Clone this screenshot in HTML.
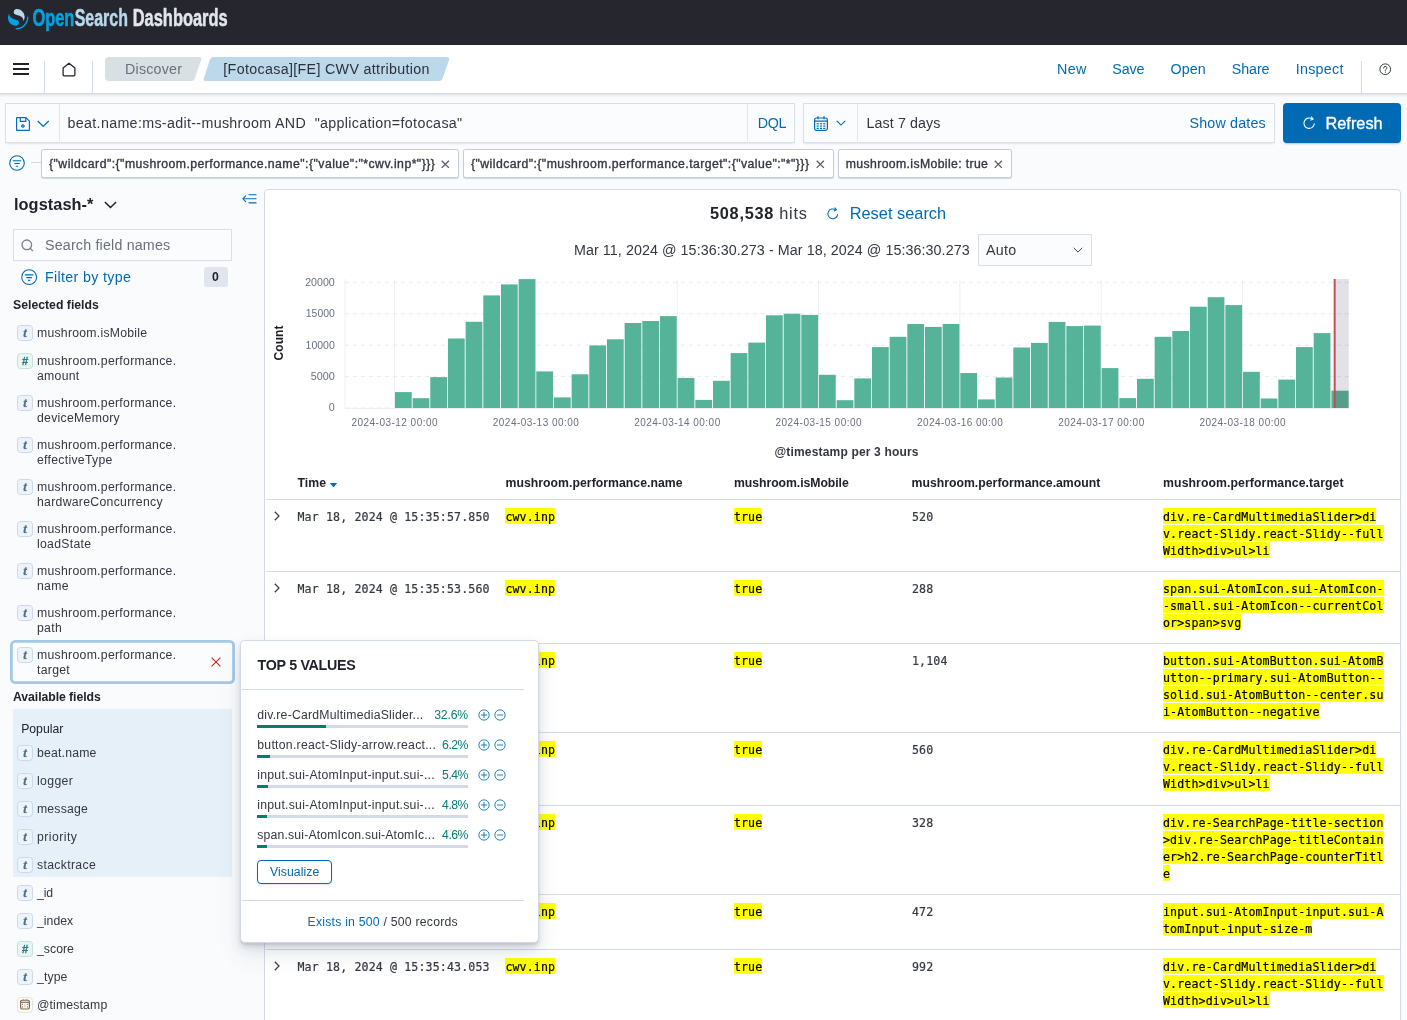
<!DOCTYPE html>
<html lang="en">
<head>
<meta charset="utf-8">
<title>Discover - OpenSearch Dashboards</title>
<style>
*{box-sizing:border-box}
html,body{margin:0;padding:0}
html{background:#FAFBFD;overflow:hidden}
body{width:1407px;height:1020px;overflow:hidden;position:relative;background:#FAFBFD;color:#343741;will-change:transform;
 font-family:var(--sans);font-size:14px;line-height:1;-webkit-font-smoothing:antialiased}
:root{--sans:"Liberation Sans",sans-serif;--mono:"DejaVu Sans Mono","Liberation Mono",monospace;--blue:#006BB4;--bd:#D3DAE6;--k:1.02}
.abs{position:absolute}
.t{position:absolute;white-space:nowrap;line-height:1;transform:translateY(-50%)}
.b{font-weight:700}
.m{font-weight:400;-webkit-text-stroke:.35px currentColor}
.blue{color:var(--blue)}
.f10{font-size:calc(10px*var(--k))}
.f12{font-size:calc(12px*var(--k))}
.f14{font-size:calc(14px*var(--k))}
.f16{font-size:calc(16px*var(--k))}
svg{position:absolute;overflow:visible}
/* header */
#hdr{left:0;top:0;width:1407px;height:45px;background:#25262E}
#nav{left:-6px;top:45px;width:1419px;height:49px;background:#fff;border-bottom:1px solid #D3DAE6;box-shadow:0 2px 3px -1px rgba(152,162,179,.35)}
.vsep{position:absolute;width:1px;background:#D3DAE6}
.crumb{position:absolute;top:57px;height:24px}
/* query */
.box{position:absolute;background:#FBFCFD;border:1px solid #D9DFEA;box-shadow:0 1px 1px -1px rgba(152,162,179,.2),0 2px 2px -1px rgba(152,162,179,.2)}
.pill{position:absolute;top:149px;height:29px;background:#fff;border:1px solid #C2CCDB;border-radius:2.500px;box-shadow:0 1px 1px rgba(120,132,155,.3)}
/* sidebar */
.ftok{position:absolute;left:17px;width:16px;height:16px;border-radius:3.500px;border:1px solid #C7DAEC;background:#EEF3FA}
.ftok.n{border-color:#BFE3D8;background:#E9F6F1}
.ftok.d{border-color:#E6E4DF;background:#FCFBF9}
.ftok i{position:absolute;left:0;top:-.100px;width:14px;height:14px;text-align:center;font:italic 700 12.600px/14px "Liberation Serif",serif;color:#4A7194;-webkit-text-stroke:.3px #4A7194}
.ftok.n i{top:0;font:italic 700 11.500px/14px "Liberation Sans",sans-serif;color:#1B8577}
.fn{position:absolute;left:37px;white-space:nowrap;line-height:15px;font-size:calc(12px*var(--k));color:#343741}
/* main */
#main{left:264.300px;top:188.900px;width:1136.600px;height:850px;background:#fff;border:1px solid #D3DAE6;border-radius:4px 4px 0 0}
.hl{position:absolute;height:1px;background:#D3DAE6}
.mono{position:absolute;font-family:var(--mono);font-size:11.600px;line-height:17px;letter-spacing:0.135px;-webkit-text-stroke:.2px currentColor;color:#343741;white-space:pre}
mark{background:linear-gradient(#FFFF00,#FFFF00) 0 0/100% 15.800px no-repeat;color:#000;padding:2px 0 0}
/* popover */
#pop{left:239.800px;top:639.800px;width:299.700px;height:303.700px;background:#fff;border:1px solid #D3DAE6;border-radius:5px;
 box-shadow:0 12px 24px rgba(65,78,101,.1),0 6px 12px rgba(65,78,101,.1),0 4px 4px rgba(65,78,101,.1),0 2px 2px rgba(65,78,101,.1)}
.bar{position:absolute;left:257px;width:211px;height:3px;background:#D3DAE6}
.bar b{position:absolute;left:0;top:0;height:3px;background:#017D73}
.w55,.w57,.w59,.w61{letter-spacing:-0.5px}
.w9{letter-spacing:-0.33px}
.w51{letter-spacing:-0.3px}
.w53{letter-spacing:-0.18px}
.w4{letter-spacing:-0.13px}
.w37{letter-spacing:-0.1px}
.w30{letter-spacing:-0.06px}
.w6,.w48{letter-spacing:-0.05px}
.w31{letter-spacing:-0.02px}
.w12,.w20{letter-spacing:0.01px}
.w49{letter-spacing:0.02px}
.w38,.w39,.w43{letter-spacing:0.03px}
.w47{letter-spacing:0.04px}
.w16,.w46{letter-spacing:0.06px}
.w62{letter-spacing:0.07px}
.w44{letter-spacing:0.08px}
.w5,.w50{letter-spacing:0.09px}
.w10{letter-spacing:0.1px}
.w40{letter-spacing:0.12px}
.w41{letter-spacing:0.15px}
.w60{letter-spacing:0.16px}
.w11,.w17,.w34{letter-spacing:0.18px}
.w32{letter-spacing:0.19px}
.w1,.w52{letter-spacing:0.22px}
.w63{letter-spacing:0.23px}
.w21,.w56,.w58{letter-spacing:0.25px}
.w45{letter-spacing:0.26px}
.w54{letter-spacing:0.27px}
.w22,.w23,.w24,.w25,.w26,.w27,.w28,.w29{letter-spacing:0.29px}
.w7{letter-spacing:0.3px}
.w18{letter-spacing:0.32px}
.w2,.w3,.w8,.w36{letter-spacing:0.33px}
.w33{letter-spacing:0.35px}
.w15{letter-spacing:0.37px}
.w14{letter-spacing:0.44px}
.w13,.w35{letter-spacing:0.46px}
.w42{letter-spacing:0.72px}
.w19{letter-spacing:1.22px}
</style>
</head>
<body>
<div id="hdr" class="abs">
<svg style="left:7.700px;top:9.400px" width="20.500" height="20.500" viewBox="0 0 64 64"><path fill="#00A3E0" d="M61.7 23.5c-1.3 0-2.3 1-2.3 2.3 0 18.6-15.1 33.7-33.7 33.7-1.3 0-2.3 1-2.3 2.3s1 2.2 2.3 2.2C46.9 64 64 46.900 64 25.800c0-1.300-1-2.300-2.300-2.300z"/><path fill="#B9D9EB" d="M48.100 38c2.200-3.600 4.300-8.300 3.900-15-.9-13.800-13.400-24.300-25.200-23.100-4.600.4-9.400 4.200-8.900 10.900.2 2.900 1.600 4.600 3.900 5.900 2.200 1.200 5 2 8.200 2.900 3.800 1.100 8.300 2.300 11.700 4.800 4.100 3 6.900 6.500 6.400 13.600z"/><path fill="#00A3E0" d="M3.900 14C1.700 17.600-.4 22.300 0 29c.9 13.800 13.400 24.300 25.200 23.100 4.600-.4 9.400-4.200 8.900-10.900-.2-2.900-1.600-4.600-3.900-5.900-2.200-1.200-5-2-8.200-2.900-3.800-1.100-8.300-2.300-11.700-4.800C6.200 24.600 3.400 21.100 3.900 14z"/></svg>
<svg style="left:0;top:0" width="240" height="45"><g font-family="Liberation Sans, sans-serif" font-weight="700" font-size="23.500" stroke-width=".500" stroke-linejoin="round">
<text x="32.400" y="25.700" fill="#00A3E0" stroke="#00A3E0" textLength="42" lengthAdjust="spacingAndGlyphs">Open</text>
<text x="74.700" y="25.700" fill="#B9D9EB" stroke="#B9D9EB" textLength="53.300" lengthAdjust="spacingAndGlyphs">Search</text>
<text x="132.700" y="25.700" fill="#E3E7EA" stroke="#E3E7EA" textLength="95" lengthAdjust="spacingAndGlyphs">Dashboards</text></g></svg>
</div>
<div id="nav" class="abs"></div>
<svg style="left:13px;top:61px" width="16" height="16" viewBox="0 0 16 16"><path d="M0 3h16M0 8h16M0 13h16" stroke="#1F212A" stroke-width="1.900" fill="none"/></svg>
<div class="vsep" style="left:44px;top:61px;height:32px"></div><div class="vsep" style="left:92px;top:61px;height:32px"></div>
<svg style="left:61.900px;top:61.500px" width="14" height="15.400" viewBox="0 0 15 16"><path d="M1.200 6.200L7.500 1.200l6.300 5v7.300a1 1 0 0 1-1 1H2.200a1 1 0 0 1-1-1z" stroke="#1F212A" stroke-width="1.350" fill="none" stroke-linejoin="round"/></svg>
<svg style="left:105px;top:57px" width="97" height="24"><path d="M4 0H94Q97.200 0 96.200 2.800L89.800 21.500Q89 24 86.300 24H4Q0 24 0 20V4Q0 0 4 0Z" fill="#D9E0E3"/></svg>
<span class="t w1 f14" style="left:125px;top:69px;color:#69707D">Discover</span>
<svg style="left:203px;top:57px" width="247" height="24"><path d="M10.500 0H244Q247 0 246.200 2.500L239.500 21.500Q238.700 24 236 24H3Q0 24 .8 21.500L7 2.500Q7.800 0 10.500 0Z" fill="#BCD9EC"/></svg>
<span class="t w2 f14" style="left:223.3px;top:69px;color:#2E3039">[Fotocasa][FE] CWV attribution</span>
<span class="t w3 f14 blue" style="left:1057px;top:69px;">New</span>
<span class="t w4 f14 blue" style="left:1112.3px;top:69px;">Save</span>
<span class="t w5 f14 blue" style="left:1170.5px;top:69px;">Open</span>
<span class="t w6 f14 blue" style="left:1231.7px;top:69px;">Share</span>
<span class="t w7 f14 blue" style="left:1295.7px;top:69px;">Inspect</span>
<div class="vsep" style="left:1361px;top:61px;height:32px"></div>
<svg style="left:1378.600px;top:62.900px" width="12.500" height="12.500" viewBox="0 0 14 14"><circle cx="7" cy="7" r="6" stroke="#343741" stroke-width="1.100" fill="none"/><path d="M5.200 5.600a1.800 1.800 0 1 1 2.600 1.600c-.5.300-.8.600-.8 1.200" stroke="#343741" stroke-width="1.100" fill="none" stroke-linecap="round"/><circle cx="7" cy="10.200" r=".7" fill="#343741"/></svg>
<div class="box" style="left:5px;top:103px;width:790px;height:40px"></div>
<div class="vsep" style="left:59px;top:104px;height:37px;background:#E3E8F0"></div><div class="vsep" style="left:747px;top:104px;height:37px;background:#E3E8F0"></div>
<svg style="left:16px;top:116.800px" width="14" height="14" viewBox="0 0 14 14"><path d="M1.100.6h8.800l3.500 3.500v8.800a.5.500 0 0 1-.5.500H1.100a.5.500 0 0 1-.5-.5V1.100a.5.500 0 0 1 .5-.5z" stroke="#006BB4" stroke-width="1.150" fill="none" stroke-linejoin="round"/><path d="M4.300.8v3.500h5.500V.8" stroke="#006BB4" stroke-width="1.150" fill="none"/><circle cx="6.900" cy="9" r="1.350" fill="#7FB3D8" stroke="#006BB4" stroke-width="1"/></svg>
<svg style="left:36.800px;top:120px" width="12.400" height="8" viewBox="0 0 12.400 8"><path d="M.7 1l5.500 5.400L11.700 1" stroke="#006BB4" stroke-width="1.350" fill="none"/></svg>
<span class="t w8 f14" style="left:67.5px;top:123px;">beat.name:ms-adit--mushroom AND  "application=fotocasa"</span>
<span class="t w9 f14 blue" style="left:757.7px;top:123px;">DQL</span>
<div class="box" style="left:803px;top:103px;width:472px;height:40px"></div>
<div class="vsep" style="left:857px;top:104px;height:37px;background:#E3E8F0"></div>
<svg style="left:814px;top:116px" width="14" height="15" viewBox="0 0 14 15"><rect x=".6" y="2" width="12.800" height="12.300" rx="1.800" stroke="#006BB4" stroke-width="1.200" fill="none"/><path d="M.6 5.200h12.800M4 .3v3M10 .3v3" stroke="#006BB4" stroke-width="1.200"/><g fill="#006BB4"><rect x="2.6" y="7.2" width="2.200" height="1.150"/><rect x="5.9" y="7.2" width="2.200" height="1.150"/><rect x="9.2" y="7.2" width="2.200" height="1.150"/><rect x="2.6" y="9.5" width="2.200" height="1.150"/><rect x="5.9" y="9.5" width="2.200" height="1.150"/><rect x="9.2" y="9.5" width="2.200" height="1.150"/><rect x="2.6" y="11.8" width="2.200" height="1.150"/><rect x="5.9" y="11.8" width="2.200" height="1.150"/><rect x="9.2" y="11.8" width="2.200" height="1.150"/></g></svg>
<svg style="left:836px;top:120px" width="10" height="6" viewBox="0 0 10 6"><path d="M.7.900L5 5.100 9.300.9" stroke="#006BB4" stroke-width="1.100" fill="none"/></svg>
<span class="t w10 f14" style="left:866.5px;top:123px;">Last 7 days</span>
<span class="t w11 f14 blue" style="left:1189.5px;top:123px;">Show dates</span>
<div class="abs" style="left:1283px;top:103px;width:118px;height:40px;border-radius:4px;background:#006BB4;box-shadow:0 2px 2px -1px rgba(0,70,120,.3)"></div>
<svg style="left:1302.500px;top:115.500px" width="12.800" height="13.700" viewBox="0 0 14 15"><path d="M12.400 8.200a5.700 5.700 0 1 1-2.300-4.900" stroke="#fff" stroke-width="1.200" fill="none"/><path d="M8.800.7l2.300 2.600-3 1.300" stroke="#fff" stroke-width="1.200" fill="none"/></svg>
<span class="t w12 f16 m" style="left:1325.5px;top:122.5px;color:#fff">Refresh</span>
<svg style="left:9px;top:155px" width="16" height="16" viewBox="0 0 16 16"><circle cx="8" cy="8" r="7.300" stroke="#006BB4" stroke-width="1.100" fill="none"/><path d="M3.800 5.800h8.400M5.300 8.500h5.400M6.900 11.200h2.200" stroke="#006BB4" stroke-width="1.100"/></svg>
<div class="hl" style="left:31px;top:162.200px;width:10px"></div>
<div class="pill" style="left:41px;width:418px"></div>
<span class="t w13 f12 m" style="left:49px;top:164px;">{"wildcard":{"mushroom.performance.name":{"value":"*cwv.inp*"}}}</span>
<svg style="left:441.2px;top:159.800px" width="8.600" height="8.600" viewBox="0 0 8.600 8.600"><path d="M.7.700l7.200 7.200M7.900.7L.7 7.900" stroke="#535966" stroke-width="1.250"/></svg>
<div class="pill" style="left:463px;width:371px"></div>
<span class="t w14 f12 m" style="left:471px;top:164px;">{"wildcard":{"mushroom.performance.target":{"value":"*"}}}</span>
<svg style="left:815.7px;top:159.800px" width="8.600" height="8.600" viewBox="0 0 8.600 8.600"><path d="M.7.700l7.200 7.200M7.900.7L.7 7.900" stroke="#535966" stroke-width="1.250"/></svg>
<div class="pill" style="left:838px;width:174px"></div>
<span class="t w15 f12 m" style="left:845.8px;top:164px;">mushroom.isMobile: true</span>
<svg style="left:993.7px;top:159.800px" width="8.600" height="8.600" viewBox="0 0 8.600 8.600"><path d="M.7.700l7.200 7.200M7.900.7L.7 7.900" stroke="#535966" stroke-width="1.250"/></svg>
<span class="t w16 f16 b" style="left:14px;top:203.7px;color:#20232B">logstash-*</span>
<svg style="left:104px;top:201px" width="13" height="8" viewBox="0 0 13 8"><path d="M.9 1l5.600 5.600L12.100 1" stroke="#1A1C21" stroke-width="1.400" fill="none"/></svg>
<svg style="left:242.400px;top:193.600px" width="15" height="9.600" viewBox="0 0 15 9.600"><path d="M6.600.7h7.900M1.200 4.800h13.300M6.600 8.900h7.900" stroke="#006BB4" stroke-width="1.100"/><path d="M3.900 1.600L.9 4.800l3 3.200" stroke="#006BB4" stroke-width="1.100" fill="none"/></svg>
<div class="box" style="left:13px;top:229px;width:219px;height:32px;box-shadow:0 1px 1px -1px rgba(152,162,179,.2)"></div>
<svg style="left:20.800px;top:238.600px" width="13" height="13" viewBox="0 0 13 13"><circle cx="5.800" cy="5.800" r="4.800" stroke="#7A808C" stroke-width="1.300" fill="none"/><path d="M9.200 9.300l2.700 2.800" stroke="#7A808C" stroke-width="1.300"/></svg>
<span class="t w17 f14" style="left:45px;top:245px;color:#69707D">Search field names</span>
<svg style="left:20.700px;top:268.700px" width="16.300" height="16.300" viewBox="0 0 16 16"><circle cx="8" cy="8" r="7.300" stroke="#006BB4" stroke-width="1.050" fill="none"/><path d="M3.800 5.800h8.400M5.300 8.500h5.400M6.900 11.200h2.200" stroke="#006BB4" stroke-width="1.050"/></svg>
<span class="t w18 f14 blue" style="left:45px;top:276.7px;">Filter by type</span>
<div class="abs" style="left:204px;top:267px;width:24px;height:19.600px;border-radius:3px;background:#E0E5EE"></div>
<span class="t w19 f12 b" style="left:212px;top:277px;color:#20232B">0</span>
<span class="t w20 f12 b" style="left:13px;top:305px;color:#20232B">Selected fields</span>
<span class="ftok" style="top:325px"><i>t</i></span>
<span class="fn w21" style="top:325.5px">mushroom.isMobile</span>
<span class="ftok n" style="top:353px"><i>#</i></span>
<span class="fn w22" style="top:353.5px">mushroom.performance.<br>amount</span>
<span class="ftok" style="top:395px"><i>t</i></span>
<span class="fn w23" style="top:395.5px">mushroom.performance.<br>deviceMemory</span>
<span class="ftok" style="top:437px"><i>t</i></span>
<span class="fn w24" style="top:437.5px">mushroom.performance.<br>effectiveType</span>
<span class="ftok" style="top:479px"><i>t</i></span>
<span class="fn w25" style="top:479.5px">mushroom.performance.<br>hardwareConcurrency</span>
<span class="ftok" style="top:521px"><i>t</i></span>
<span class="fn w26" style="top:521.5px">mushroom.performance.<br>loadState</span>
<span class="ftok" style="top:563px"><i>t</i></span>
<span class="fn w27" style="top:563.5px">mushroom.performance.<br>name</span>
<span class="ftok" style="top:605px"><i>t</i></span>
<span class="fn w28" style="top:605.5px">mushroom.performance.<br>path</span>
<div class="abs" style="left:10.300px;top:640.300px;width:224.700px;height:43.400px;background:#FBFCFE;box-shadow:inset 0 0 0 2.800px #A3C9E5;border-radius:5.500px"></div>
<span class="ftok" style="top:647px"><i>t</i></span>
<span class="fn w29" style="top:647.5px">mushroom.performance.<br>target</span>
<svg style="left:211px;top:657px" width="10" height="10" viewBox="0 0 10 10"><path d="M.6.600l8.800 8.800M9.400.6L.6 9.400" stroke="#BD271E" stroke-width="1.100"/></svg>
<span class="t w30 f12 b" style="left:13px;top:697px;color:#20232B">Available fields</span>
<div class="abs" style="left:13px;top:709px;width:219px;height:168px;background:#E6F0F8"></div>
<span class="t w31 f12" style="left:21.2px;top:729px;color:#20232B">Popular</span>
<span class="ftok" style="top:745px"><i>t</i></span>
<span class="fn w32" style="top:745.5px">beat.name</span>
<span class="ftok" style="top:773px"><i>t</i></span>
<span class="fn w33" style="top:773.5px">logger</span>
<span class="ftok" style="top:801px"><i>t</i></span>
<span class="fn w34" style="top:801.5px">message</span>
<span class="ftok" style="top:829px"><i>t</i></span>
<span class="fn w35" style="top:829.5px">priority</span>
<span class="ftok" style="top:857px"><i>t</i></span>
<span class="fn w36" style="top:857.5px">stacktrace</span>
<span class="ftok" style="top:885px"><i>t</i></span>
<span class="fn w37" style="top:885.5px">_id</span>
<span class="ftok" style="top:913px"><i>t</i></span>
<span class="fn w38" style="top:913.5px">_index</span>
<span class="ftok n" style="top:941px"><i>#</i></span>
<span class="fn w39" style="top:941.5px">_score</span>
<span class="ftok" style="top:969px"><i>t</i></span>
<span class="fn w40" style="top:969.5px">_type</span>
<span class="ftok d" style="top:997px"><svg style="left:2.100px;top:.800px" width="10" height="10.600" viewBox="0 0 10 10.600"><path d="M3.400.2v1M6.500.2v1" stroke="#8A93A5" stroke-width=".9"/><rect x=".6" y="1.300" width="8.800" height="8.700" rx="1.500" stroke="#7B6A4B" stroke-width="1.150" fill="none"/><path d="M.6 3.300h8.800" stroke="#7B6A4B" stroke-width="1.100"/><rect x="4.200" y="5" width="1.500" height="3.400" rx=".5" fill="#D3D5DB"/><g fill="#7B6A4B"><circle cx="2.500" cy="5.300" r=".62"/><circle cx="7.400" cy="5.300" r=".62"/><circle cx="2.500" cy="7.900" r=".62"/><circle cx="7.400" cy="7.900" r=".62"/></g></svg></span>
<span class="fn w41" style="top:997.5px">@timestamp</span>
<div id="main" class="abs"></div>
<span class="t w42 f16" style="left:710px;top:213px;"><b style="color:#20232B">508,538</b> hits</span>
<svg style="left:827px;top:207px" width="12" height="13" viewBox="0 0 14 15"><path d="M12.400 8.200a5.700 5.700 0 1 1-2.300-4.900" stroke="#006BB4" stroke-width="1.200" fill="none"/><path d="M8.800.7l2.300 2.600-3 1.300" stroke="#006BB4" stroke-width="1.200" fill="none"/></svg>
<span class="t w43 f16 blue" style="left:849.7px;top:212.8px;">Reset search</span>
<span class="t w44 f14" style="left:574px;top:249.7px;">Mar 11, 2024 @ 15:36:30.273 - Mar 18, 2024 @ 15:36:30.273</span>
<div class="box" style="left:978px;top:234px;width:114px;height:32px;box-shadow:0 1px 1px -1px rgba(152,162,179,.2)"></div>
<span class="t w45 f14" style="left:986px;top:250px;">Auto</span>
<svg style="left:1073px;top:247px" width="10" height="6" viewBox="0 0 10 6"><path d="M.7.800L5 5.100 9.300.8" stroke="#343741" stroke-width=".950" fill="none"/></svg>
<svg style="left:0;top:0" width="1407" height="470" font-family="Liberation Sans, sans-serif">
<path d="M345 279V408.500H1349" stroke="#EEF0F4" stroke-width="1" fill="none"/>
<path d="M394.5 279V408" stroke="#EEF0F5" stroke-width="1"/>
<path d="M535.8 279V408" stroke="#EEF0F5" stroke-width="1"/>
<path d="M677.2 279V408" stroke="#EEF0F5" stroke-width="1"/>
<path d="M818.5 279V408" stroke="#EEF0F5" stroke-width="1"/>
<path d="M959.9 279V408" stroke="#EEF0F5" stroke-width="1"/>
<path d="M1101.2 279V408" stroke="#EEF0F5" stroke-width="1"/>
<path d="M1242.5 279V408" stroke="#EEF0F5" stroke-width="1"/>
<path d="M345 408.0H1349" stroke="#E9EBF0" stroke-width="1" stroke-dasharray="4 4"/>
<text x="334.800" y="411.3" text-anchor="end" font-size="10" fill="#69707D" textLength="6" lengthAdjust="spacingAndGlyphs">0</text>
<path d="M345 376.6H1349" stroke="#E9EBF0" stroke-width="1" stroke-dasharray="4 4"/>
<text x="334.800" y="379.9" text-anchor="end" font-size="10" fill="#69707D" textLength="24" lengthAdjust="spacingAndGlyphs">5000</text>
<path d="M345 345.2H1349" stroke="#E9EBF0" stroke-width="1" stroke-dasharray="4 4"/>
<text x="334.800" y="348.5" text-anchor="end" font-size="10" fill="#69707D" textLength="29.2" lengthAdjust="spacingAndGlyphs">10000</text>
<path d="M345 313.8H1349" stroke="#E9EBF0" stroke-width="1" stroke-dasharray="4 4"/>
<text x="334.800" y="317.1" text-anchor="end" font-size="10" fill="#69707D" textLength="29" lengthAdjust="spacingAndGlyphs">15000</text>
<path d="M345 282.4H1349" stroke="#E9EBF0" stroke-width="1" stroke-dasharray="4 4"/>
<text x="334.800" y="285.7" text-anchor="end" font-size="10" fill="#69707D" textLength="29.6" lengthAdjust="spacingAndGlyphs">20000</text>
<rect x="1335.700" y="279" width="13" height="129" fill="rgba(105,105,140,.2)"/>
<rect x="394.95" y="392.1" width="16.77" height="15.9" fill="#54B399"/>
<rect x="412.62" y="398.2" width="16.77" height="9.8" fill="#54B399"/>
<rect x="430.29" y="377.1" width="16.77" height="30.9" fill="#54B399"/>
<rect x="447.95" y="338.5" width="16.77" height="69.5" fill="#54B399"/>
<rect x="465.62" y="321.8" width="16.77" height="86.2" fill="#54B399"/>
<rect x="483.29" y="295.4" width="16.77" height="112.6" fill="#54B399"/>
<rect x="500.96" y="284.4" width="16.77" height="123.6" fill="#54B399"/>
<rect x="518.63" y="279.1" width="16.77" height="128.9" fill="#54B399"/>
<rect x="536.29" y="371.4" width="16.77" height="36.6" fill="#54B399"/>
<rect x="553.96" y="397.4" width="16.77" height="10.6" fill="#54B399"/>
<rect x="571.63" y="374.3" width="16.77" height="33.7" fill="#54B399"/>
<rect x="589.30" y="345.4" width="16.77" height="62.6" fill="#54B399"/>
<rect x="606.97" y="339.3" width="16.77" height="68.7" fill="#54B399"/>
<rect x="624.63" y="323.0" width="16.77" height="85.0" fill="#54B399"/>
<rect x="642.30" y="321.0" width="16.77" height="87.0" fill="#54B399"/>
<rect x="659.97" y="316.1" width="16.77" height="91.9" fill="#54B399"/>
<rect x="677.64" y="377.9" width="16.77" height="30.1" fill="#54B399"/>
<rect x="695.31" y="399.9" width="16.77" height="8.1" fill="#54B399"/>
<rect x="712.97" y="380.8" width="16.77" height="27.2" fill="#54B399"/>
<rect x="730.64" y="353.1" width="16.77" height="54.9" fill="#54B399"/>
<rect x="748.31" y="342.6" width="16.77" height="65.4" fill="#54B399"/>
<rect x="765.98" y="315.3" width="16.77" height="92.7" fill="#54B399"/>
<rect x="783.65" y="313.7" width="16.77" height="94.3" fill="#54B399"/>
<rect x="801.31" y="314.9" width="16.77" height="93.1" fill="#54B399"/>
<rect x="818.98" y="374.8" width="16.77" height="33.2" fill="#54B399"/>
<rect x="836.65" y="400.2" width="16.77" height="7.8" fill="#54B399"/>
<rect x="854.32" y="378.4" width="16.77" height="29.6" fill="#54B399"/>
<rect x="871.99" y="347.1" width="16.77" height="60.9" fill="#54B399"/>
<rect x="889.65" y="336.8" width="16.77" height="71.2" fill="#54B399"/>
<rect x="907.32" y="324.0" width="16.77" height="84.0" fill="#54B399"/>
<rect x="924.99" y="326.9" width="16.77" height="81.1" fill="#54B399"/>
<rect x="942.66" y="324.0" width="16.77" height="84.0" fill="#54B399"/>
<rect x="960.33" y="373.0" width="16.77" height="35.0" fill="#54B399"/>
<rect x="977.99" y="399.4" width="16.77" height="8.6" fill="#54B399"/>
<rect x="995.66" y="377.5" width="16.77" height="30.5" fill="#54B399"/>
<rect x="1013.33" y="347.5" width="16.77" height="60.5" fill="#54B399"/>
<rect x="1031.00" y="342.9" width="16.77" height="65.1" fill="#54B399"/>
<rect x="1048.67" y="321.9" width="16.77" height="86.1" fill="#54B399"/>
<rect x="1066.33" y="326.1" width="16.77" height="81.9" fill="#54B399"/>
<rect x="1084.00" y="325.6" width="16.77" height="82.4" fill="#54B399"/>
<rect x="1101.67" y="368.1" width="16.77" height="39.9" fill="#54B399"/>
<rect x="1119.34" y="398.1" width="16.77" height="9.9" fill="#54B399"/>
<rect x="1137.01" y="378.8" width="16.77" height="29.2" fill="#54B399"/>
<rect x="1154.67" y="336.8" width="16.77" height="71.2" fill="#54B399"/>
<rect x="1172.34" y="331.0" width="16.77" height="77.0" fill="#54B399"/>
<rect x="1190.01" y="306.7" width="16.77" height="101.3" fill="#54B399"/>
<rect x="1207.68" y="297.2" width="16.77" height="110.8" fill="#54B399"/>
<rect x="1225.35" y="305.1" width="16.77" height="102.9" fill="#54B399"/>
<rect x="1243.01" y="371.8" width="16.77" height="36.2" fill="#54B399"/>
<rect x="1260.68" y="398.5" width="16.77" height="9.5" fill="#54B399"/>
<rect x="1278.35" y="379.6" width="16.77" height="28.4" fill="#54B399"/>
<rect x="1296.02" y="347.1" width="16.77" height="60.9" fill="#54B399"/>
<rect x="1313.69" y="333.1" width="16.77" height="74.9" fill="#54B399"/>
<rect x="1331.35" y="390.7" width="3.65" height="17.3" fill="#54B399"/>
<rect x="1335" y="390.7" width="13.60" height="17.3" fill="#559E8C"/>
<rect x="1333.700" y="279" width="2" height="129" fill="#C05050"/>
<text x="394.5" y="426.300" text-anchor="middle" font-size="10" fill="#69707D" textLength="86" lengthAdjust="spacing">2024-03-12 00:00</text>
<text x="535.8" y="426.300" text-anchor="middle" font-size="10" fill="#69707D" textLength="86" lengthAdjust="spacing">2024-03-13 00:00</text>
<text x="677.2" y="426.300" text-anchor="middle" font-size="10" fill="#69707D" textLength="86" lengthAdjust="spacing">2024-03-14 00:00</text>
<text x="818.5" y="426.300" text-anchor="middle" font-size="10" fill="#69707D" textLength="86" lengthAdjust="spacing">2024-03-15 00:00</text>
<text x="959.9" y="426.300" text-anchor="middle" font-size="10" fill="#69707D" textLength="86" lengthAdjust="spacing">2024-03-16 00:00</text>
<text x="1101.2" y="426.300" text-anchor="middle" font-size="10" fill="#69707D" textLength="86" lengthAdjust="spacing">2024-03-17 00:00</text>
<text x="1242.5" y="426.300" text-anchor="middle" font-size="10" fill="#69707D" textLength="86" lengthAdjust="spacing">2024-03-18 00:00</text>
<text transform="translate(283,343) rotate(-90)" text-anchor="middle" font-size="12" font-weight="700" fill="#1A1C21" textLength="35" lengthAdjust="spacing">Count</text>
<text x="846.500" y="456" text-anchor="middle" font-size="12" font-weight="700" fill="#343741" textLength="144" lengthAdjust="spacing">@timestamp per 3 hours</text>
</svg>
<span class="t w46 f12 b" style="left:297.5px;top:483px;color:#20232B">Time</span>
<svg style="left:329.900px;top:483.300px" width="7" height="4" viewBox="0 0 7 4"><path d="M.4 0h6.200q.6 0 .2.500L4 3.700q-.5.500-1 0L.2.500Q-.2 0 .4 0z" fill="#006BB4"/></svg>
<span class="t w47 f12 b" style="left:505.5px;top:483px;color:#20232B">mushroom.performance.name</span>
<span class="t w48 f12 b" style="left:734px;top:483px;color:#20232B">mushroom.isMobile</span>
<span class="t w49 f12 b" style="left:911.5px;top:483px;color:#20232B">mushroom.performance.amount</span>
<span class="t w50 f12 b" style="left:1163.1px;top:483px;color:#20232B">mushroom.performance.target</span>
<div class="hl" style="left:266px;top:499px;width:1134px"></div>
<svg style="left:274px;top:511.2px" width="6" height="10" viewBox="0 0 6 10"><path d="M.8.700L5 5 .8 9.300" stroke="#3A3D48" stroke-width="1.250" fill="none"/></svg>
<span class="mono" style="left:297.500px;top:508.5px">Mar 18, 2024 @ 15:35:57.850</span>
<span class="mono" style="left:505.400px;top:508.5px"><mark>cwv.inp</mark></span>
<span class="mono" style="left:733.900px;top:508.5px"><mark>true</mark></span>
<span class="mono" style="left:912px;top:508.5px">520</span>
<span class="mono" style="left:1163px;top:508.5px"><mark>div.re-CardMultimediaSlider&gt;di</mark><br><mark>v.react-Slidy.react-Slidy--full</mark><br><mark>Width&gt;div&gt;ul&gt;li</mark></span>
<div class="hl" style="left:266px;top:571px;width:1134px"></div>
<svg style="left:274px;top:583.2px" width="6" height="10" viewBox="0 0 6 10"><path d="M.8.700L5 5 .8 9.300" stroke="#3A3D48" stroke-width="1.250" fill="none"/></svg>
<span class="mono" style="left:297.500px;top:580.5px">Mar 18, 2024 @ 15:35:53.560</span>
<span class="mono" style="left:505.400px;top:580.5px"><mark>cwv.inp</mark></span>
<span class="mono" style="left:733.900px;top:580.5px"><mark>true</mark></span>
<span class="mono" style="left:912px;top:580.5px">288</span>
<span class="mono" style="left:1163px;top:580.5px"><mark>span.sui-AtomIcon.sui-AtomIcon-</mark><br><mark>-small.sui-AtomIcon--currentCol</mark><br><mark>or&gt;span&gt;svg</mark></span>
<div class="hl" style="left:266px;top:643px;width:1134px"></div>
<svg style="left:274px;top:655.2px" width="6" height="10" viewBox="0 0 6 10"><path d="M.8.700L5 5 .8 9.300" stroke="#3A3D48" stroke-width="1.250" fill="none"/></svg>
<span class="mono" style="left:297.500px;top:652.5px">Mar 18, 2024 @ 15:35:50.000</span>
<span class="mono" style="left:505.400px;top:652.5px"><mark>cwv.inp</mark></span>
<span class="mono" style="left:733.900px;top:652.5px"><mark>true</mark></span>
<span class="mono" style="left:912px;top:652.5px">1,104</span>
<span class="mono" style="left:1163px;top:652.5px"><mark>button.sui-AtomButton.sui-AtomB</mark><br><mark>utton--primary.sui-AtomButton--</mark><br><mark>solid.sui-AtomButton--center.su</mark><br><mark>i-AtomButton--negative</mark></span>
<div class="hl" style="left:266px;top:732px;width:1134px"></div>
<svg style="left:274px;top:744.2px" width="6" height="10" viewBox="0 0 6 10"><path d="M.8.700L5 5 .8 9.300" stroke="#3A3D48" stroke-width="1.250" fill="none"/></svg>
<span class="mono" style="left:297.500px;top:741.5px">Mar 18, 2024 @ 15:35:48.000</span>
<span class="mono" style="left:505.400px;top:741.5px"><mark>cwv.inp</mark></span>
<span class="mono" style="left:733.900px;top:741.5px"><mark>true</mark></span>
<span class="mono" style="left:912px;top:741.5px">560</span>
<span class="mono" style="left:1163px;top:741.5px"><mark>div.re-CardMultimediaSlider&gt;di</mark><br><mark>v.react-Slidy.react-Slidy--full</mark><br><mark>Width&gt;div&gt;ul&gt;li</mark></span>
<div class="hl" style="left:266px;top:805px;width:1134px"></div>
<svg style="left:274px;top:817.2px" width="6" height="10" viewBox="0 0 6 10"><path d="M.8.700L5 5 .8 9.300" stroke="#3A3D48" stroke-width="1.250" fill="none"/></svg>
<span class="mono" style="left:297.500px;top:814.5px">Mar 18, 2024 @ 15:35:46.000</span>
<span class="mono" style="left:505.400px;top:814.5px"><mark>cwv.inp</mark></span>
<span class="mono" style="left:733.900px;top:814.5px"><mark>true</mark></span>
<span class="mono" style="left:912px;top:814.5px">328</span>
<span class="mono" style="left:1163px;top:814.5px"><mark>div.re-SearchPage-title-section</mark><br><mark>&gt;div.re-SearchPage-titleContain</mark><br><mark>er&gt;h2.re-SearchPage-counterTitl</mark><br><mark>e</mark></span>
<div class="hl" style="left:266px;top:894px;width:1134px"></div>
<svg style="left:274px;top:906.2px" width="6" height="10" viewBox="0 0 6 10"><path d="M.8.700L5 5 .8 9.300" stroke="#3A3D48" stroke-width="1.250" fill="none"/></svg>
<span class="mono" style="left:297.500px;top:903.5px">Mar 18, 2024 @ 15:35:44.000</span>
<span class="mono" style="left:505.400px;top:903.5px"><mark>cwv.inp</mark></span>
<span class="mono" style="left:733.900px;top:903.5px"><mark>true</mark></span>
<span class="mono" style="left:912px;top:903.5px">472</span>
<span class="mono" style="left:1163px;top:903.5px"><mark>input.sui-AtomInput-input.sui-A</mark><br><mark>tomInput-input-size-m</mark></span>
<div class="hl" style="left:266px;top:949px;width:1134px"></div>
<svg style="left:274px;top:961.2px" width="6" height="10" viewBox="0 0 6 10"><path d="M.8.700L5 5 .8 9.300" stroke="#3A3D48" stroke-width="1.250" fill="none"/></svg>
<span class="mono" style="left:297.500px;top:958.5px">Mar 18, 2024 @ 15:35:43.053</span>
<span class="mono" style="left:505.400px;top:958.5px"><mark>cwv.inp</mark></span>
<span class="mono" style="left:733.900px;top:958.5px"><mark>true</mark></span>
<span class="mono" style="left:912px;top:958.5px">992</span>
<span class="mono" style="left:1163px;top:958.5px"><mark>div.re-CardMultimediaSlider&gt;di</mark><br><mark>v.react-Slidy.react-Slidy--full</mark><br><mark>Width&gt;div&gt;ul&gt;li</mark></span>
<div id="pop" class="abs"></div>
<span class="t w51 f14 b" style="left:257.6px;top:665px;color:#20232B">TOP 5 VALUES</span>
<div class="hl" style="left:242px;top:689px;width:282px"></div>
<span class="t w52 f12" style="left:257.3px;top:715px;">div.re-CardMultimediaSlider...</span>
<span class="t w53 f12" style="right:939px;top:715px;color:#017D73">32.6%</span>
<div class="bar" style="top:724.5px"><b style="width:68.8px"></b></div>
<svg style="left:477.500px;top:709px" width="12" height="12" viewBox="0 0 12 12"><circle cx="6" cy="6" r="5.150" stroke="#006BB4" stroke-width=".850" fill="none"/><path d="M2.900 6h6.200M6 2.900v6.200" stroke="#006BB4" stroke-width=".850"/></svg>
<svg style="left:493.500px;top:709px" width="12" height="12" viewBox="0 0 12 12"><circle cx="6" cy="6" r="5.150" stroke="#006BB4" stroke-width=".850" fill="none"/><path d="M2.900 6h6.200" stroke="#006BB4" stroke-width=".850"/></svg>
<span class="t w54 f12" style="left:257.3px;top:745px;">button.react-Slidy-arrow.react...</span>
<span class="t w55 f12" style="right:939px;top:745px;color:#017D73">6.2%</span>
<div class="bar" style="top:754.5px"><b style="width:13.1px"></b></div>
<svg style="left:477.500px;top:739px" width="12" height="12" viewBox="0 0 12 12"><circle cx="6" cy="6" r="5.150" stroke="#006BB4" stroke-width=".850" fill="none"/><path d="M2.900 6h6.200M6 2.900v6.200" stroke="#006BB4" stroke-width=".850"/></svg>
<svg style="left:493.500px;top:739px" width="12" height="12" viewBox="0 0 12 12"><circle cx="6" cy="6" r="5.150" stroke="#006BB4" stroke-width=".850" fill="none"/><path d="M2.900 6h6.200" stroke="#006BB4" stroke-width=".850"/></svg>
<span class="t w56 f12" style="left:257.3px;top:775px;">input.sui-AtomInput-input.sui-...</span>
<span class="t w57 f12" style="right:939px;top:775px;color:#017D73">5.4%</span>
<div class="bar" style="top:784.5px"><b style="width:11.4px"></b></div>
<svg style="left:477.500px;top:769px" width="12" height="12" viewBox="0 0 12 12"><circle cx="6" cy="6" r="5.150" stroke="#006BB4" stroke-width=".850" fill="none"/><path d="M2.900 6h6.200M6 2.900v6.200" stroke="#006BB4" stroke-width=".850"/></svg>
<svg style="left:493.500px;top:769px" width="12" height="12" viewBox="0 0 12 12"><circle cx="6" cy="6" r="5.150" stroke="#006BB4" stroke-width=".850" fill="none"/><path d="M2.900 6h6.200" stroke="#006BB4" stroke-width=".850"/></svg>
<span class="t w58 f12" style="left:257.3px;top:805px;">input.sui-AtomInput-input.sui-...</span>
<span class="t w59 f12" style="right:939px;top:805px;color:#017D73">4.8%</span>
<div class="bar" style="top:814.5px"><b style="width:10.1px"></b></div>
<svg style="left:477.500px;top:799px" width="12" height="12" viewBox="0 0 12 12"><circle cx="6" cy="6" r="5.150" stroke="#006BB4" stroke-width=".850" fill="none"/><path d="M2.900 6h6.200M6 2.900v6.200" stroke="#006BB4" stroke-width=".850"/></svg>
<svg style="left:493.500px;top:799px" width="12" height="12" viewBox="0 0 12 12"><circle cx="6" cy="6" r="5.150" stroke="#006BB4" stroke-width=".850" fill="none"/><path d="M2.900 6h6.200" stroke="#006BB4" stroke-width=".850"/></svg>
<span class="t w60 f12" style="left:257.3px;top:835px;">span.sui-AtomIcon.sui-AtomIc...</span>
<span class="t w61 f12" style="right:939px;top:835px;color:#017D73">4.6%</span>
<div class="bar" style="top:844.5px"><b style="width:9.7px"></b></div>
<svg style="left:477.500px;top:829px" width="12" height="12" viewBox="0 0 12 12"><circle cx="6" cy="6" r="5.150" stroke="#006BB4" stroke-width=".850" fill="none"/><path d="M2.900 6h6.200M6 2.900v6.200" stroke="#006BB4" stroke-width=".850"/></svg>
<svg style="left:493.500px;top:829px" width="12" height="12" viewBox="0 0 12 12"><circle cx="6" cy="6" r="5.150" stroke="#006BB4" stroke-width=".850" fill="none"/><path d="M2.900 6h6.200" stroke="#006BB4" stroke-width=".850"/></svg>
<div class="abs" style="left:257px;top:860px;width:75px;height:24px;border:1px solid #006BB4;border-radius:4px;background:#fff;box-shadow:0 1px 2px rgba(0,107,180,.15)"></div>
<span class="t w62 f12 blue" style="left:270px;top:872px;">Visualize</span>
<div class="hl" style="left:242px;top:900px;width:282px"></div>
<span class="t w63 f12" style="left:307.5px;top:922px;"><span class="blue">Exists in 500</span> / 500 records</span>
</body>
</html>
